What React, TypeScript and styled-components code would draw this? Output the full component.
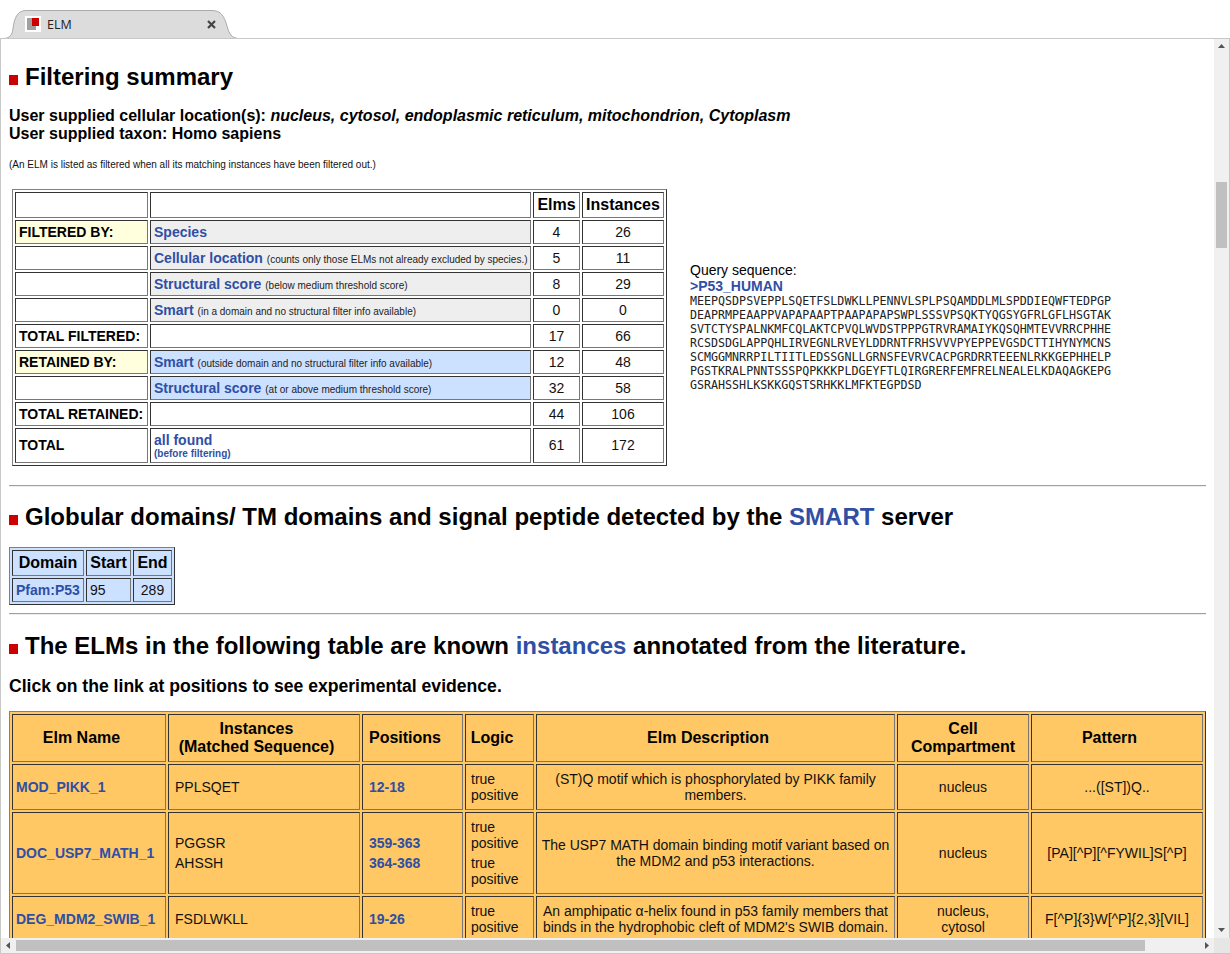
import React from "react";
import styled, { createGlobalStyle } from "styled-components";

const Global = createGlobalStyle`
  html, body { margin: 0; padding: 0; overflow: hidden; background: #fff; }
  body { font-family: "Liberation Sans", Arial, sans-serif; color: #000; }
`;

const Frame = styled.div`
  width: 1230px; height: 954px; display: flex; flex-direction: column; overflow: hidden; background: #fff;
`;
const TabBar = styled.div`
  height: 39px; box-sizing: border-box; border-bottom: 1px solid #c8c8c8; padding-left: 4px; display: flex; align-items: flex-end; flex: none;
`;
const Tab = styled.div`
  position: relative; width: 234px; height: 29px; margin-bottom: -1px; display: flex; align-items: center;
  padding-left: 13px; box-sizing: border-box; font: 12.5px "Open Sans", sans-serif; color: #222;
`;
const TabShape = styled.svg`
  position: absolute; left: 0; top: 0; z-index: 0;
`;
const FavBox = styled.svg`
  position: relative; z-index: 1; flex: none; margin-left: 8px; margin-bottom: 2px;
`;
const TabTitle = styled.span`
  position: relative; z-index: 1; margin-left: 6px; margin-bottom: 1px; flex: 1;
`;
const CloseIcon = styled.svg`
  position: relative; z-index: 1; flex: none; margin-right: 22px; margin-bottom: 1px;
`;
const Middle = styled.div`
  flex: 1; min-height: 0; display: flex; border-left: 1px solid #c8c8c8;
`;
const Page = styled.div`
  flex: 1; min-width: 0; overflow: hidden; padding: 24px 8px 0 8px;
`;
const VBar = styled.div`
  width: 16px; flex: none; background: #f0f0f0; border-right: 1px solid #c8c8c8; box-sizing: border-box;
  display: flex; flex-direction: column; align-items: center; position: relative;
`;
const VThumb = styled.div`
  width: 11px; height: 66px; margin-top: 143px; margin-left: -1px; background: #c0c0c0;
`;
const Arrow = styled.svg`
  flex: none; display: block;
`;
const VUp = styled(Arrow)`
  position: absolute; top: 5px; left: 4px;
`;
const VDown = styled(Arrow)`
  position: absolute; bottom: 6px; left: 4px;
`;
const HBar = styled.div`
  height: 16px; flex: none; display: flex; align-items: center; background: #f0f0f0; box-sizing: border-box; border-bottom: 1px solid #c8c8c8; border-left: 1px solid #c8c8c8;
`;
const HThumb = styled.div`
  width: 1129px; height: 11px; margin-left: 6px; background: #c0c0c0;
`;
const Corner = styled.div`
  width: 16px; height: 100%; margin-left: auto; background: #e6e6e6;
`;
const HLeft = styled(Arrow)`
  margin-left: 5px;
`;
const HRight = styled(Arrow)`
  margin-left: 60px;
`;

const Heading = styled.h2<{ $mt?: number }>`
  margin: ${(p) => p.$mt ?? 0}px 0 0 0; font-size: 24px; line-height: 28px; font-weight: bold; display: flex; align-items: center;
`;
const Bullet = styled.span`
  width: 9px; height: 10px; background: #cc0000; flex: none; margin-right: 7px; margin-top: 5px;
`;
const HeadText = styled.span``;
const Link = styled.a`
  color: #2f4fa5; text-decoration: none; font-weight: bold;
`;
const HeadLink = styled.a`
  color: #2f4fa5; text-decoration: none;
`;
const Lead = styled.div<{ $mt: number; $size?: number }>`
  margin-top: ${(p) => p.$mt}px; font-size: ${(p) => p.$size ?? 16}px; font-weight: bold; line-height: 18px;
`;
const Note = styled.div`
  margin-top: 16px; font-size: 10px; line-height: 12px; color: #111;
`;
const SummaryRow = styled.div`
  display: flex; align-items: center; margin-top: 18px; padding-left: 3px;
`;
const SeqBlock = styled.div`
  margin-left: 23px; padding-bottom: 2px; font-size: 14px; line-height: 16px;
`;
const SeqText = styled.div`
  font-family: "DejaVu Sans Mono", monospace; font-size: 11.67px; line-height: 14px; color: #222; white-space: pre;
`;
const Rule = styled.hr<{ $mt: number }>`
  margin: ${(p) => p.$mt}px 0 0 0; height: 2px; border: 0; border-top: 1px solid #a0a0a0; border-bottom: 1px solid #eee; box-sizing: border-box;
`;
const Table = styled.table<{ $bg?: string; $w: number; $mt?: number }>`
  table-layout: fixed; border-collapse: separate; border-spacing: 2px; width: ${(p) => p.$w}px; flex: none;
  margin: ${(p) => p.$mt ?? 0}px 0 0 0;
  border: 1px solid; border-color: #808080 #333 #333 #808080;
  background: ${(p) => p.$bg ?? "#fff"}; font-size: 14px; line-height: 16px; box-sizing: border-box;
`;
const Row = styled.tr``;
const Cell = styled.td<{ $h?: number; $bg?: string; $center?: boolean; $pl?: number; $pr?: number; $pt?: number; $pb?: number; $head?: boolean; $bold?: boolean }>`
  box-sizing: border-box; height: ${(p) => p.$h ?? 24}px;
  padding: ${(p) => p.$pt ?? 0}px ${(p) => p.$pr ?? (p.$center ? 1 : 2)}px ${(p) => p.$pb ?? 0}px ${(p) => p.$pl ?? (p.$center ? 1 : 3)}px;
  border: 1px solid; border-color: #333 #777 #777 #333;
  background: ${(p) => p.$bg ?? "transparent"};
  text-align: ${(p) => (p.$center ? "center" : "left")};
  font-weight: ${(p) => (p.$head || p.$bold ? "bold" : "normal")};
  font-size: ${(p) => (p.$head ? 16 : 14)}px; color: #111;
  ${(p) => (p.$head ? "color:#000;line-height:18px;" : "")}
  ${(p) => (p.$bold ? "color:#000;" : "")}
  vertical-align: middle; overflow: hidden;
`;
const Small = styled.span`
  font-size: 10px; color: #222; font-weight: normal;
`;
const TinyLink = styled.a`
  display: block; color: #2f4fa5; font-size: 10px; font-weight: bold; line-height: 12px; text-decoration: none;
`;
const Stack = styled.div<{ $gap: number }>`
  display: flex; flex-direction: column; gap: ${(p) => p.$gap}px;
`;
const Line = styled.div``;

const Colour = { blue: "#cce0ff", grey: "#eeeeee", yellow: "#ffffdd", orange: "#ffc864" };

const seq = [
  "MEEPQSDPSVEPPLSQETFSLDWKLLPENNVLSPLPSQAMDDLMLSPDDIEQWFTEDPGP",
  "DEAPRMPEAAPPVAPAPAAPTPAAPAPAPSWPLSSSVPSQKTYQGSYGFRLGFLHSGTAK",
  "SVTCTYSPALNKMFCQLAKTCPVQLWVDSTPPPGTRVRAMAIYKQSQHMTEVVRRCPHHE",
  "RCSDSDGLAPPQHLIRVEGNLRVEYLDDRNTFRHSVVVPYEPPEVGSDCTTIHYNYMCNS",
  "SCMGGMNRRPILTIITLEDSSGNLLGRNSFEVRVCACPGRDRRTEEENLRKKGEPHHELP",
  "PGSTKRALPNNTSSSPQPKKKPLDGEYFTLQIRGRERFEMFRELNEALELKDAQAGKEPG",
  "GSRAHSSHLKSKKGQSTSRHKKLMFKTEGPDSD",
];

const summary: { a: string; aBg?: string; link: string; note?: string; bg?: string; n: string; i: string }[] = [
  { a: "FILTERED BY:", aBg: Colour.yellow, link: "Species", bg: Colour.grey, n: "4", i: "26" },
  { a: "", link: "Cellular location", note: "(counts only those ELMs not already excluded by species.)", bg: Colour.grey, n: "5", i: "11" },
  { a: "", link: "Structural score", note: "(below medium threshold score)", bg: Colour.grey, n: "8", i: "29" },
  { a: "", link: "Smart", note: "(in a domain and no structural filter info available)", bg: Colour.grey, n: "0", i: "0" },
  { a: "TOTAL FILTERED:", link: "", n: "17", i: "66" },
  { a: "RETAINED BY:", aBg: Colour.yellow, link: "Smart", note: "(outside domain and no structural filter info available)", bg: Colour.blue, n: "12", i: "48" },
  { a: "", link: "Structural score", note: "(at or above medium threshold score)", bg: Colour.blue, n: "32", i: "58" },
  { a: "TOTAL RETAINED:", link: "", n: "44", i: "106" },
];

const elms = [
  {
    name: "MOD_PIKK_1", h: 46, inst: ["PPLSQET"], pos: ["12-18"], logic: 1,
    desc: "(ST)Q motif which is phosphorylated by PIKK family members.", cell: ["nucleus"], pat: "...([ST])Q..",
  },
  {
    name: "DOC_USP7_MATH_1", h: 82, inst: ["PGGSR", "AHSSH"], pos: ["359-363", "364-368"], logic: 2,
    desc: "The USP7 MATH domain binding motif variant based on the MDM2 and p53 interactions.", cell: ["nucleus"], pat: "[PA][^P][^FYWIL]S[^P]",
  },
  {
    name: "DEG_MDM2_SWIB_1", h: 46, inst: ["FSDLWKLL"], pos: ["19-26"], logic: 1,
    desc: "An amphipatic α-helix found in p53 family members that binds in the hydrophobic cleft of MDM2's SWIB domain.", cell: ["nucleus,", "cytosol"], pat: "F[^P]{3}W[^P]{2,3}[VIL]",
  },
];

const Cols = ({ w }: { w: number[] }) => (
  <colgroup>
    {w.map((x, i) => (
      <col key={i} width={x} />
    ))}
  </colgroup>
);

export default function App() {
  return (
    <Frame>
      <Global />
      <TabBar>
        <Tab>
          <TabShape width="234" height="29" viewBox="0 0 234 29">
            <path d="M0 28.5 C6 28 8 25 9 19 C10 9 13 .5 22 .5 L208 .5 C217 .5 220 6 223 16 C225 24 228 28 234 28.5 Z" fill="#dcdcdc" stroke="#ababab" />
            <path d="M0 28.5 L234 28.5" stroke="#c8c8c8" />
          </TabShape>
          <FavBox width="16" height="16" viewBox="0 0 16 16">
            <rect width="16" height="16" fill="#fff" />
            <path d="M2 2 H7 V10 H11 V14 H2 Z" fill="#a0a0a0" />
            <rect x="7" y="2" width="7" height="8" fill="#cc0000" />
          </FavBox>
          <TabTitle>ELM</TabTitle>
          <CloseIcon width="9" height="9" viewBox="0 0 9 9">
            <path d="M1 1 L8 8 M8 1 L1 8" stroke="#444" strokeWidth="2.2" />
          </CloseIcon>
        </Tab>
      </TabBar>
      <Middle>
        <Page>
          <Heading>
            <Bullet />
            <HeadText>Filtering summary</HeadText>
          </Heading>
          <Lead $mt={16}>
            User supplied cellular location(s): <i>nucleus, cytosol, endoplasmic reticulum, mitochondrion, Cytoplasm</i>
          </Lead>
          <Lead $mt={0}>User supplied taxon: Homo sapiens</Lead>
          <Note>(An ELM is listed as filtered when all its matching instances have been filtered out.)</Note>
          <SummaryRow>
            <Table $w={655}>
              <Cols w={[133, 381, 47, 82]} />
              <tbody>
                <Row>
                  <Cell $h={26} />
                  <Cell $h={26} />
                  <Cell $h={26} $center $head>Elms</Cell>
                  <Cell $h={26} $center $head>Instances</Cell>
                </Row>
                {summary.map((r, i) => (
                  <Row key={i}>
                    <Cell $bg={r.aBg} $bold>{r.a}</Cell>
                    <Cell $bg={r.bg} $pt={r.note ? 2 : 0}>
                      {r.link && <Link>{r.link}</Link>} {r.note && <Small>{r.note}</Small>}
                    </Cell>
                    <Cell $center>{r.n}</Cell>
                    <Cell $center>{r.i}</Cell>
                  </Row>
                ))}
                <Row>
                  <Cell $h={35} $bold $pb={2}>TOTAL</Cell>
                  <Cell $h={35}>
                    <Link>all found</Link>
                    <TinyLink>(before filtering)</TinyLink>
                  </Cell>
                  <Cell $h={35} $center $pb={2}>61</Cell>
                  <Cell $h={35} $center $pb={2}>172</Cell>
                </Row>
              </tbody>
            </Table>
            <SeqBlock>
              <Line>Query sequence:</Line>
              <Line><Link>&gt;P53_HUMAN</Link></Line>
              <SeqText>{seq.join("\n")}</SeqText>
            </SeqBlock>
          </SummaryRow>
          <Rule $mt={19} />
          <Heading $mt={16}>
            <Bullet />
            <HeadText>
              Globular domains/ TM domains and signal peptide detected by the <HeadLink>SMART</HeadLink> server
            </HeadText>
          </Heading>
          <Table $w={166} $bg={Colour.blue} $mt={16}>
            <Cols w={[72, 45, 39]} />
            <tbody>
              <Row>
                <Cell $h={26} $center $head>Domain</Cell>
                <Cell $h={26} $center $head>Start</Cell>
                <Cell $h={26} $center $head>End</Cell>
              </Row>
              <Row>
                <Cell><Link>Pfam:P53</Link></Cell>
                <Cell>95</Cell>
                <Cell $center>289</Cell>
              </Row>
            </tbody>
          </Table>
          <Rule $mt={8} />
          <Heading $mt={17}>
            <Bullet />
            <HeadText>
              The ELMs in the following table are known <HeadLink>instances</HeadLink> annotated from the literature.
            </HeadText>
          </Heading>
          <Lead $mt={17} $size={17.6}>Click on the link at positions to see experimental evidence.</Lead>
          <Table $w={1197} $bg={Colour.orange} $mt={16}>
            <Cols w={[154, 192, 101, 69, 359, 132, 172]} />
            <tbody>
              <Row>
                <Cell $h={48} $center $head $pr={16}>Elm Name</Cell>
                <Cell $h={48} $center $head $pr={16}>Instances<br />(Matched Sequence)</Cell>
                <Cell $h={48} $center $head $pr={16}>Positions</Cell>
                <Cell $h={48} $center $head $pr={16}>Logic</Cell>
                <Cell $h={48} $center $head $pr={16}>Elm Description</Cell>
                <Cell $h={48} $center $head>Cell<br />Compartment</Cell>
                <Cell $h={48} $center $head $pr={16}>Pattern</Cell>
              </Row>
              {elms.map((e) => (
                <Row key={e.name}>
                  <Cell $h={e.h}><Link>{e.name}</Link></Cell>
                  <Cell $h={e.h} $pl={6}>
                    <Stack $gap={4}>{e.inst.map((x) => <Line key={x}>{x}</Line>)}</Stack>
                  </Cell>
                  <Cell $h={e.h} $pl={6}>
                    <Stack $gap={4}>{e.pos.map((x) => <Line key={x}><Link>{x}</Link></Line>)}</Stack>
                  </Cell>
                  <Cell $h={e.h} $pl={5}>
                    <Stack $gap={4}>
                      {Array.from({ length: e.logic }).map((_, i) => <Line key={i}>true positive</Line>)}
                    </Stack>
                  </Cell>
                  <Cell $h={e.h} $center>{e.desc}</Cell>
                  <Cell $h={e.h} $center>{e.cell.map((x) => <Line key={x}>{x}</Line>)}</Cell>
                  <Cell $h={e.h} $center>{e.pat}</Cell>
                </Row>
              ))}
            </tbody>
          </Table>
        </Page>
        <VBar>
          <VUp width="7" height="4" viewBox="0 0 7 4"><path d="M3.5 0 L7 4 H0 Z" fill="#555" /></VUp>
          <VThumb />
          <VDown width="7" height="4" viewBox="0 0 7 4"><path d="M0 0 H7 L3.5 4 Z" fill="#555" /></VDown>
        </VBar>
      </Middle>
      <HBar>
        <HLeft width="4" height="7" viewBox="0 0 4 7"><path d="M4 0 V7 L0 3.5 Z" fill="#555" /></HLeft>
        <HThumb />
        <HRight width="4" height="7" viewBox="0 0 4 7"><path d="M0 0 L4 3.5 L0 7 Z" fill="#555" /></HRight>
        <Corner />
      </HBar>
    </Frame>
  );
}
